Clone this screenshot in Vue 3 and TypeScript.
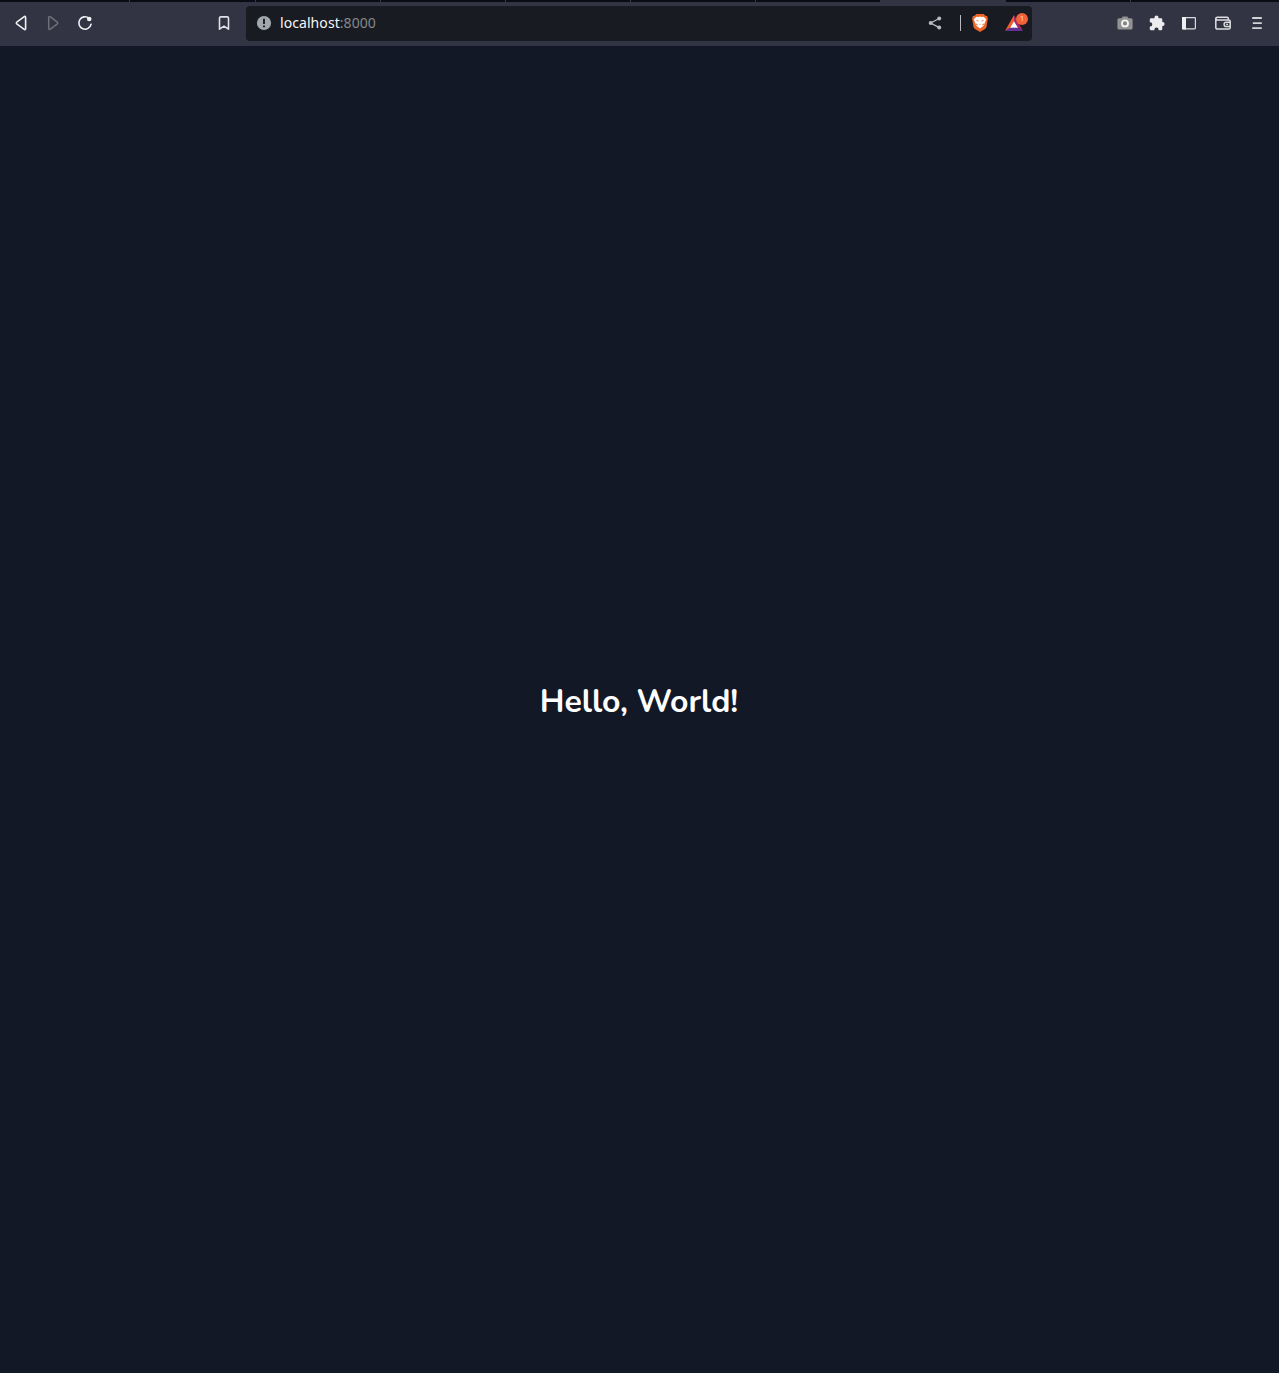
<script setup lang="ts">
const tabs: { width: number; active?: boolean; divided?: boolean }[] = [
  { width: 130, divided: true },
  { width: 126, divided: true },
  { width: 125, divided: true },
  { width: 125, divided: true },
  { width: 125, divided: true },
  { width: 125, divided: true },
  { width: 124 },
  { width: 126, active: true },
  { width: 125, divided: true },
  { width: 148 },
]
</script>

<template>
  <div class="window">
    <div class="tab-strip">
      <div
        v-for="(tab, i) in tabs"
        :key="i"
        class="tab"
        :class="{ active: tab.active, divided: tab.divided }"
        :style="{ width: tab.width + 'px' }"
      ></div>
    </div>
    <header class="toolbar">
      <nav class="navigation">
        <button aria-label="Back">
          <svg viewBox="0 0 20 20"><path d="M14.6 4.4v11.2c0 .8-.8 1.2-1.4.8L5.8 10.9c-.6-.5-.6-1.3 0-1.8l7.4-5.5c.6-.4 1.4 0 1.4.8Z" fill="none" stroke="#f0f0f2" stroke-width="1.6" stroke-linejoin="round" /></svg>
        </button>
        <button aria-label="Forward">
          <svg viewBox="0 0 20 20"><path d="M5.7 4.4v11.2c0 .8.8 1.2 1.4.8l7.2-5.5c.6-.5.6-1.3 0-1.8L7.1 3.6c-.6-.4-1.4 0-1.4.8Z" fill="none" stroke="#6d6f79" stroke-width="1.5" stroke-linejoin="round" /></svg>
        </button>
        <button aria-label="Reload">
          <svg viewBox="0 0 20 20"><path d="M14 5.2A6.2 6.2 0 1 0 16.1 11.2" fill="none" stroke="#f0f0f2" stroke-width="1.6" stroke-linecap="round" /><circle cx="14.2" cy="6" r="2.3" fill="#f0f0f2" /></svg>
        </button>
      </nav>
      <button class="bookmark" aria-label="Bookmark">
        <svg viewBox="0 0 20 20"><path d="M6.8 3.9h6.4q1.3 0 1.3 1.3v11L10 13.2 5.5 16.2v-11Q5.5 3.9 6.8 3.9Z" fill="none" stroke="#e2e2e5" stroke-width="1.6" stroke-linejoin="round" /></svg>
      </button>
      <div class="address">
        <svg class="site-info" viewBox="0 0 16 16"><circle cx="8" cy="8" r="7.1" fill="#a2a7ae" /><path d="M8 3.8v5.3M8 10.5v1.8" stroke="#181b21" stroke-width="1.9" /></svg>
        <div class="url">localhost<span>:8000</span></div>
        <svg class="share" viewBox="0 0 16 16"><path d="M12.2 3.5 3.7 8l8.5 4.6" fill="none" stroke="#b9bbbe" stroke-width="1.4" /><g fill="#b9bbbe"><circle cx="12.2" cy="3.5" r="2" /><circle cx="3.7" cy="8" r="2" /><circle cx="12.2" cy="12.6" r="2" /></g></svg>
        <i class="divider"></i>
        <svg class="shield" viewBox="0 0 16 18"><path d="M4.3 0h7.4l1.6 1.8 1.9.3.7 3-.5 2.1-.8 5.4c-.2 1.2-1 2-2 2.7L8 18l-4.6-2.7c-1-.7-1.8-1.5-2-2.7L.6 7.2.1 5.1l.7-3 1.9-.3Z" fill="#ee6528" /><path d="m4.5 2.7 2 .3L8 2.6l1.5.4 2-.3 2.5 2.4-.3 1.6-1.4 3.3-.2 1.3-2.1 1.7L8 14.5l-2-1.5-2.1-1.7-.2-1.3-1.4-3.3L2 5.1Z" fill="#fff" /><path d="m4.4 6 2.3.7-.4.9-1.6-.6ZM11.6 6l-2.3.7.4.9 1.6-.6ZM7.1 10.3h1.8l-.9.8ZM4 9.5l1.4.6.3 1.4-1.5-.8ZM12 9.5l-1.4.6-.3 1.4 1.5-.8Z" fill="#e76938" /></svg>
        <div class="rewards">
          <svg viewBox="0 0 18 16"><path d="M9 0 0 16l9-5.3Z" fill="#f15a2d" /><path d="M9 0v10.7L18 16Z" fill="#a42b66" /><path d="m0 16 5.2-3.3h7.6L18 16Z" fill="#633095" /><path d="m9 6.2 3.9 6.5H5.1Z" fill="#fff" /></svg>
          <span class="badge">1</span>
        </div>
      </div>
      <div class="actions">
        <button aria-label="Screenshot">
          <svg viewBox="0 0 20 20"><path d="M4 5.3h2.4l1.3-1.9h4.6l1.3 1.9H16q1.6 0 1.6 1.5v8.1q0 1.6-1.6 1.6H4q-1.6 0-1.6-1.6V6.8Q2.4 5.3 4 5.3Z" fill="#929292" /><circle cx="10" cy="10.4" r="3" fill="#858585" stroke="#f4f4f4" stroke-width="1.8" /></svg>
        </button>
        <button aria-label="Extensions">
          <svg viewBox="0 0 20 20"><path d="M4.1 5.2h3.4V4.6a2 2 0 0 1 4 0v.6H14q1.3 0 1.3 1.3v2.6h.4a1.9 1.9 0 0 1 0 3.8h-.4v3q0 1.3-1.3 1.3h-2.4v-.5a2.1 2.1 0 0 0-4.2 0v.5H4.1q-1.3 0-1.3-1.3v-2.4h.4a2.1 2.1 0 0 0 0-4.2h-.4V6.5q0-1.3 1.3-1.3Z" fill="#ededef" /></svg>
        </button>
        <button aria-label="Sidebar">
          <svg viewBox="0 0 20 20"><rect x="3.6" y="4.6" width="12.8" height="11.2" rx=".7" fill="none" stroke="#dadade" stroke-width="1.2" /><path d="M3 4h4v12.4H3Z" fill="#eeeeef" /></svg>
        </button>
        <button class="wallet" aria-label="Wallet">
          <svg viewBox="0 0 20 20"><path d="M15.3 7V5.6Q15.3 4.2 14 4.2H4.5q-1.7 0-1.7 1.4T4.5 7h11q1.7 0 1.7 1.6v5.8q0 1.7-1.7 1.7h-11q-1.7 0-1.7-1.7v-9" fill="none" stroke="#dedee2" stroke-width="1.5" /><path d="M17.4 9.3h-4.2a2.1 2.1 0 0 0 0 4.2h4.2M13.2 11.4H15" fill="none" stroke="#dedee2" stroke-width="1.4" /></svg>
        </button>
        <button class="menu" aria-label="Menu">
          <svg viewBox="0 0 20 20"><path d="M5.2 5h9.6M5.8 10.1h9M5.2 15.2h9.6" stroke="#d2d3d6" stroke-width="1.8" /></svg>
        </button>
      </div>
    </header>
    <main class="page"><h1>Hello, World!</h1></main>
  </div>
</template>

<style>
body {
  background: #121826;
}
</style>

<style scoped>
.window {
  display: flex;
  flex-direction: column;
  height: 100vh;
  overflow: hidden;
  background: #121826;
}
.tab-strip {
  display: flex;
  flex: 0 0 2px;
  background: #0b0b16;
}
.tab {
  box-sizing: border-box;
  flex: none;
}
.tab.divided {
  border-right: 1px solid #393a45;
}
.tab.active {
  background: #323443;
}
.toolbar {
  box-sizing: border-box;
  display: flex;
  align-items: center;
  flex: 0 0 44px;
  padding: 0 12px 2px 11px;
  background: #323443;
}
.navigation {
  display: flex;
  gap: 12px;
}
button {
  display: block;
  flex: none;
  width: 20px;
  height: 20px;
  padding: 0;
  border: 0;
  background: none;
}
svg {
  display: block;
  flex: none;
}
button svg {
  width: 20px;
  height: 20px;
}
.bookmark {
  margin-left: 119px;
}
.address {
  box-sizing: border-box;
  display: flex;
  align-items: center;
  width: 786px;
  height: 35px;
  margin-top: 1px;
  margin-left: 12px;
  padding: 0 4px 1px 10px;
  border-radius: 4px;
  background: #181b21;
}
.site-info {
  width: 16px;
  height: 16px;
}
.url {
  flex: 1;
  margin-left: 8px;
  color: #f6f7f8;
  font: 14px/20px "Noto Sans", sans-serif;
  letter-spacing: 0.07px;
}
.url span {
  color: #85888d;
}
.share {
  width: 16px;
  height: 16px;
}
.divider {
  width: 1px;
  height: 16px;
  margin-left: 17px;
  background: #b7b9bc;
}
.shield {
  width: 16px;
  height: 18px;
  margin-left: 11px;
}
.rewards {
  position: relative;
  width: 23px;
  height: 16px;
  margin-left: 17px;
}
.rewards svg {
  width: 18px;
  height: 16px;
}
.badge {
  position: absolute;
  top: -2px;
  right: 0;
  width: 12px;
  height: 12px;
  border-radius: 50%;
  background: #f26139;
  color: #ffe3d5;
  font: 7px/12px "Noto Sans", sans-serif;
  text-align: center;
}
.actions {
  display: flex;
  gap: 12px;
  margin-left: auto;
}
.wallet,
.menu {
  margin-left: 2px;
}
.page {
  display: flex;
  flex: 1;
  align-items: center;
  justify-content: center;
  padding: 0 1px 16px 0;
  border-top: 1px solid #14152a;
}
h1 {
  margin: 0;
  color: #fff;
  font: 700 32px/40px Nunito, Lato, sans-serif;
}
</style>
